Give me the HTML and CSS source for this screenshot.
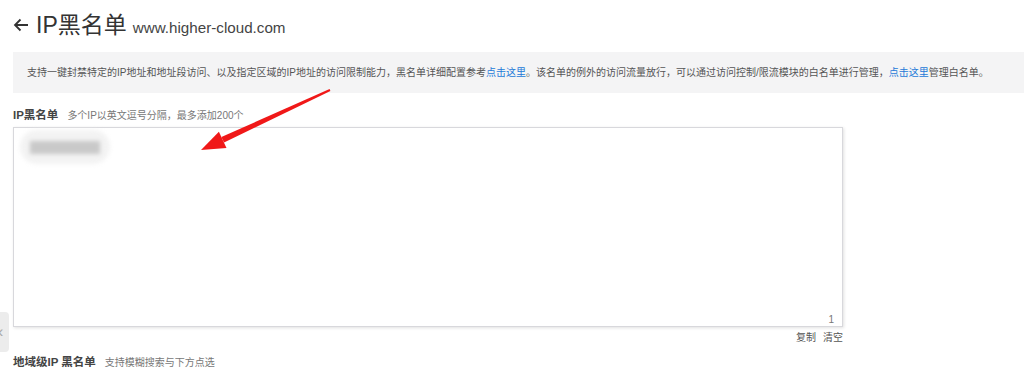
FILE: index.html
```html
<!DOCTYPE html>
<html lang="zh-CN">
  <head>
    <meta charset="UTF-8">
    <title>IP黑名单</title>
    <link rel="stylesheet" href="styles.css">
  </head>
  <body>
    <div class="page">
      <div class="page-title">
        <svg class="back" width="16" height="14" viewBox="0 0 16 14">
          <path d="M15 7H2M7.5 1.5L2 7l5.5 5.5" fill="none" stroke="#333" stroke-width="1.8"/>
        </svg>
        <span class="title-text">IP黑名单</span>
        <span class="domain">www.higher-cloud.com</span>
      </div>

      <div class="notice">
        支持一键封禁特定的IP地址和地址段访问、以及指定区域的IP地址的访问限制能力，黑名单详细配置参考<a href="#">点击这里</a>。该名单的例外的访问流量放行，可以通过访问控制/限流模块的白名单进行管理，<a href="#">点击这里</a>管理白名单。
      </div>

      <div class="field-label">
        <span class="label-main">IP黑名单</span>
        <span class="label-hint">多个IP以英文逗号分隔，最多添加200个</span>
      </div>

      <div class="ip-box">
        <div class="ip-blur"><span></span></div>
        <span class="counter">1</span>
      </div>
      <div class="box-actions">
        <a href="#">复制</a>
        <a href="#">清空</a>
      </div>

      <div class="field-label region">
        <span class="label-main">地域级IP 黑名单</span>
        <span class="label-hint">支持模糊搜索与下方点选</span>
      </div>
    </div>

    <div class="side-tab">‹</div>

    <!-- annotation arrow -->
    <svg class="pointer" width="1024" height="383" viewBox="0 0 1024 383">
      <polygon points="330.4,91 329.6,89 221.4,137.1 224,142.5" fill="#f01818"/>
      <polygon points="201,150 218.9,131.7 226.5,148" fill="#f01818"/>
    </svg>
  </body>
</html>
```

FILE: styles.css
```css
* {
  box-sizing: border-box;
  margin: 0;
  padding: 0;
}

body {
  font-family: "Liberation Sans", "Noto Sans CJK SC", sans-serif;
  background: #fff;
  color: #333;
  width: 1024px;
  height: 383px;
  overflow: hidden;
  position: relative;
}

.page {
  padding-left: 13px;
}

.page-title {
  display: flex;
  align-items: baseline;
  height: 52px;
  padding-top: 10px;
  line-height: 30px;
  color: #333;
}

.back {
  align-self: flex-start;
  margin: 8px 7px 0 0;
}

.title-text {
  font-size: 23px;
}

.domain {
  font-size: 15.2px;
  color: #444;
  margin-left: 6px;
}

.notice {
  height: 41px;
  line-height: 41px;
  background: #f4f4f5;
  padding-left: 14px;
  font-size: 10px;
  color: #555;
  white-space: nowrap;
}

.notice a,
.box-actions a {
  text-decoration: none;
}

.notice a {
  color: #1e7ad8;
}

.field-label {
  display: flex;
  align-items: baseline;
  gap: 9px;
  margin-top: 14px;
  line-height: 16px;
}

.label-main {
  font-size: 11.5px;
  font-weight: bold;
  color: #444;
}

.label-hint {
  font-size: 10px;
  color: #777;
}

.ip-box {
  position: relative;
  margin-top: 3px;
  width: 830px;
  height: 200px;
  border: 1px solid #d8d8dc;
  box-shadow: 1px 1px 3px rgba(0, 0, 0, 0.12);
  background: #fff;
}

.ip-blur {
  margin: 2px 0 0 6px;
  width: 90px;
  height: 34px;
  border-radius: 17px;
  background: #f3f3f3;
  filter: blur(2px);
  padding: 11px 0 0 10px;
}

.ip-blur span {
  display: block;
  width: 70px;
  height: 13px;
  background: #c9c9c9;
}

.counter {
  position: absolute;
  right: 8px;
  bottom: 1px;
  font-size: 10px;
  color: #777;
}

.box-actions {
  width: 830px;
  display: flex;
  justify-content: flex-end;
  gap: 7px;
  padding-top: 4px;
  line-height: 14px;
  font-size: 10px;
}

.box-actions a {
  color: #555;
}

.field-label.region {
  margin-top: 9px;
}

.side-tab {
  position: absolute;
  left: -8px;
  top: 312px;
  width: 17px;
  height: 40px;
  background: #ececec;
  border-radius: 4px;
  color: #aaa;
  font-size: 16px;
  line-height: 40px;
  padding-left: 6px;
}

.pointer {
  position: absolute;
  left: 0;
  top: 0;
  pointer-events: none;
}
```
